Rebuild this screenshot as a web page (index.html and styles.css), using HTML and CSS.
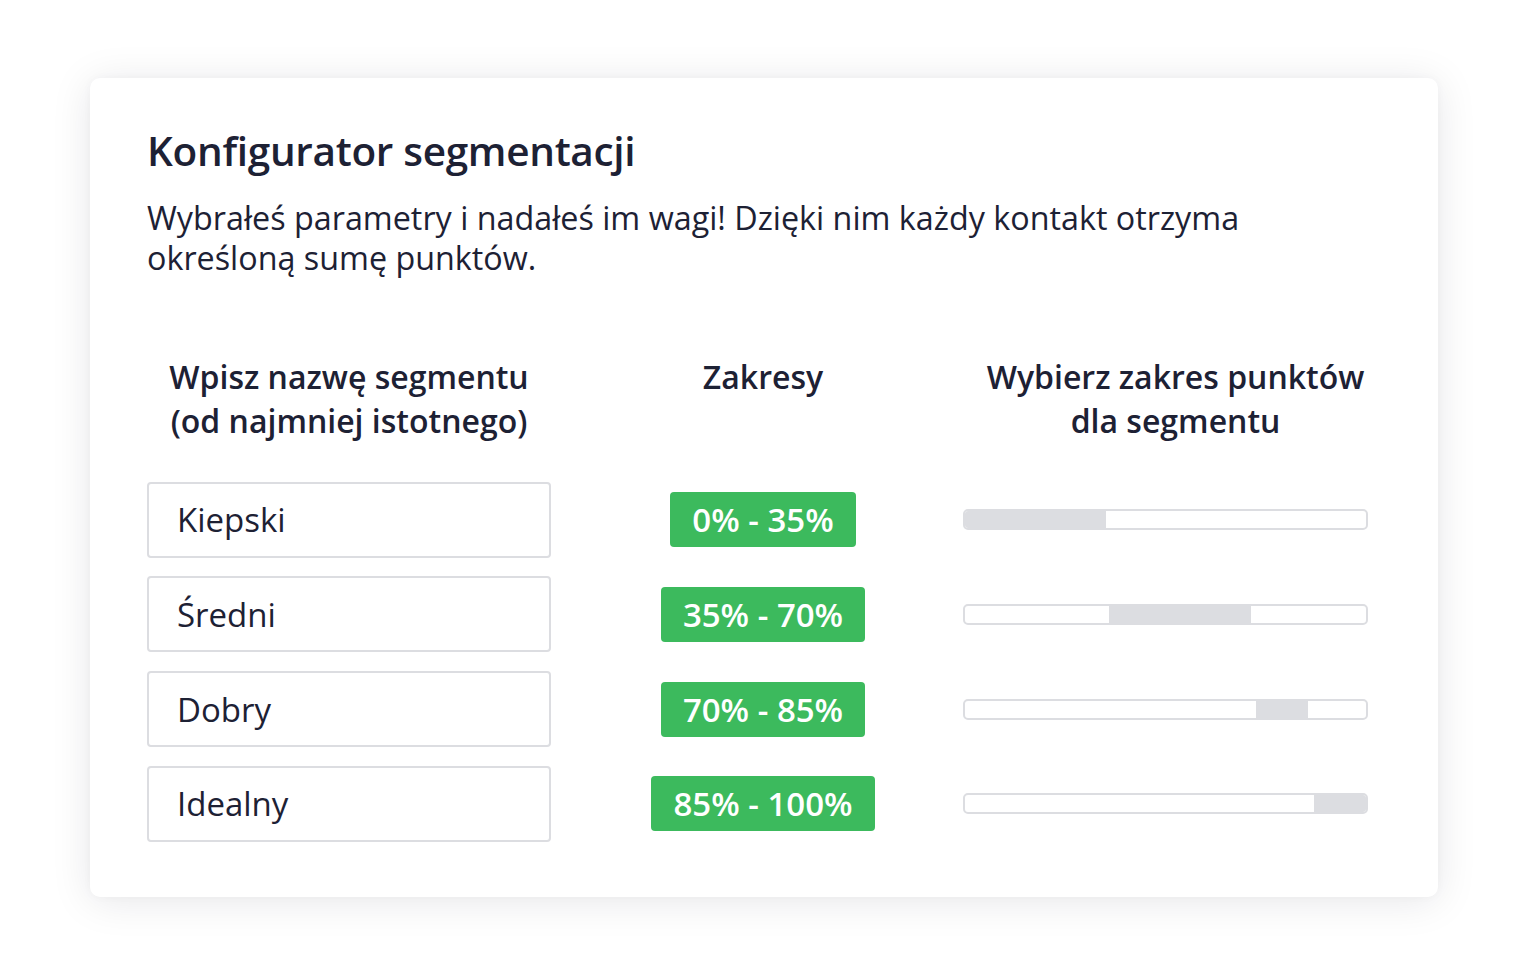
FILE: index.html
```html
<!DOCTYPE html>
<html lang="pl">
<head>
<meta charset="utf-8">
<title>Konfigurator segmentacji</title>
<link rel="stylesheet" href="styles.css">
</head>
<body>
<div class="page">
  <section class="card">
    <h1 class="title">Konfigurator segmentacji</h1>
    <p class="lead">Wybrałeś parametry i nadałeś im wagi! Dzięki nim każdy kontakt otrzyma<br>określoną sumę punktów.</p>

    <div class="grid">
      <div class="head head-name">Wpisz nazwę segmentu<br>(od najmniej istotnego)</div>
      <div class="head head-range">Zakresy</div>
      <div class="head head-slider">Wybierz zakres punktów<br>dla segmentu</div>

      <div class="field">Kiepski</div>
      <div class="cell-range"><span class="badge">0% - 35%</span></div>
      <div class="cell-slider"><div class="track"><div class="fill" style="margin-left:0%;width:35.2%"></div></div></div>

      <div class="field">Średni</div>
      <div class="cell-range"><span class="badge">35% - 70%</span></div>
      <div class="cell-slider"><div class="track"><div class="fill" style="margin-left:35.9%;width:35.4%"></div></div></div>

      <div class="field">Dobry</div>
      <div class="cell-range"><span class="badge">70% - 85%</span></div>
      <div class="cell-slider"><div class="track"><div class="fill" style="margin-left:72.6%;width:12.9%"></div></div></div>

      <div class="field">Idealny</div>
      <div class="cell-range"><span class="badge">85% - 100%</span></div>
      <div class="cell-slider"><div class="track"><div class="fill" style="margin-left:87%;width:13%"></div></div></div>
    </div>
  </section>
</div>
</body>
</html>
```
FILE: styles.css
```css
html, body {
  margin: 0;
  padding: 0;
  background: #ffffff;
}
body {
  font-family: "Open Sans", "Noto Sans", "DejaVu Sans", sans-serif;
  color: #1d2134;
}
.page {
  padding: 78px 90px 75px 90px;
}
.card {
  height: 819px;
  box-sizing: border-box;
  background: #ffffff;
  border-radius: 10px;
  box-shadow: 0 4px 40px rgba(20, 24, 40, 0.10), 0 0 10px rgba(20, 24, 40, 0.03);
  padding: 48px 70px 0 57px;
}
.title {
  margin: 0;
  font-size: 40.5px;
  line-height: 50px;
  font-weight: 600;
  letter-spacing: -0.3px;
}
.lead {
  margin: 21px 0 0 0;
  font-size: 32.3px;
  line-height: 40px;
  font-weight: 400;
}
.grid {
  margin-top: 78px;
  display: grid;
  grid-template-columns: 404px 1fr 405px;
  row-gap: 18.7px;
  align-items: center;
}
.head {
  font-size: 32px;
  line-height: 44px;
  font-weight: 600;
  text-align: center;
  align-self: start;
  margin-bottom: 20px;
}
.head-range {
  padding-left: 12px;
}
.head-slider {
  padding-left: 20px;
}
.field {
  height: 76px;
  box-sizing: border-box;
  border: 2.5px solid #dcdde1;
  border-radius: 4px;
  padding-left: 28px;
  display: flex;
  align-items: center;
  font-size: 33px;
  color: #1d2134;
}
.cell-range {
  display: flex;
  justify-content: center;
  padding-left: 12px;
}
.badge {
  display: inline-flex;
  align-items: center;
  height: 55px;
  padding: 0 22px;
  background: #3cba5d;
  color: #ffffff;
  border-radius: 4px;
  font-size: 33px;
  font-weight: 600;
}
.track {
  height: 21px;
  box-sizing: border-box;
  border: 2px solid #dcdde1;
  border-radius: 5px;
  background: #ffffff;
  display: flex;
  overflow: hidden;
}
.fill {
  height: 100%;
  background: #dcdde1;
}
```
